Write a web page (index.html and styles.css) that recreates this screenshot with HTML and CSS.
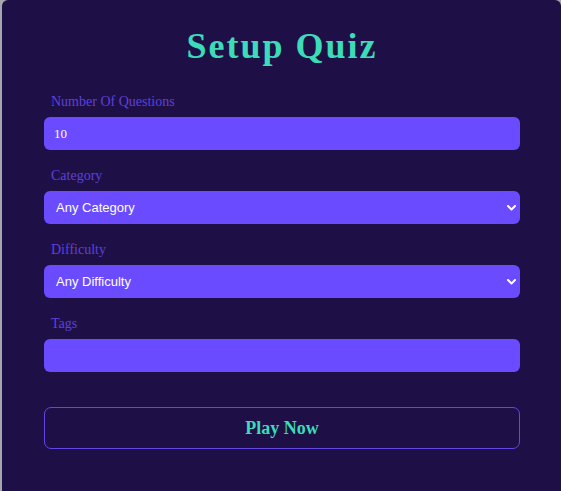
FILE: index.html
```html
<!DOCTYPE html>
<html lang="en">
<head>
<meta charset="utf-8">
<title>Setup Quiz</title>
<link rel="stylesheet" href="styles.css">
</head>
<body>
<main class="card">
  <h1 class="title">Setup Quiz</h1>
  <form class="form">
    <div class="group">
      <label class="label" for="amount">Number Of Questions</label>
      <input class="field field-num" id="amount" type="text" value="10">
    </div>
    <div class="group">
      <label class="label" for="category">Category</label>
      <div class="select-wrap">
        <select class="field field-select" id="category"><option>Any Category</option></select>
        <svg class="chevron" width="9" height="6" viewBox="0 0 9 6"><path d="M1 1 L4.5 4.5 L8 1" fill="none" stroke="#fff" stroke-width="2" stroke-linecap="round" stroke-linejoin="round"/></svg>
      </div>
    </div>
    <div class="group">
      <label class="label" for="difficulty">Difficulty</label>
      <div class="select-wrap">
        <select class="field field-select" id="difficulty"><option>Any Difficulty</option></select>
        <svg class="chevron" width="9" height="6" viewBox="0 0 9 6"><path d="M1 1 L4.5 4.5 L8 1" fill="none" stroke="#fff" stroke-width="2" stroke-linecap="round" stroke-linejoin="round"/></svg>
      </div>
    </div>
    <div class="group">
      <label class="label" for="tags">Tags</label>
      <input class="field" id="tags" type="text">
    </div>
    <button class="play" type="button">Play Now</button>
  </form>
</main>
</body>
</html>
```
FILE: styles.css
```css
html, body {
  margin: 0;
  padding: 0;
}
body {
  background: #a8a6ad;
  height: 491px;
  overflow: hidden;
}
.card {
  margin-left: 2px;
  width: 559px;
  height: 491px;
  box-sizing: border-box;
  padding: 26px 0 0 42px;
  background: #1e1047;
  border-radius: 6px 6px 0 0;
}
.title {
  margin: 0;
  width: 476px;
  text-align: center;
  font-family: "Liberation Serif", serif;
  font-weight: bold;
  font-size: 36px;
  line-height: 40px;
  letter-spacing: 2px;
  color: #3bdcb7;
}
.form {
  width: 476px;
  margin-top: 26px;
  display: flex;
  flex-direction: column;
  gap: 16px;
}
.group {
  display: flex;
  flex-direction: column;
}
.label {
  display: block;
  padding: 1px 0 0 7px;
  margin-bottom: 6px;
  font-family: "Liberation Serif", serif;
  font-size: 14px;
  line-height: 18px;
  color: #5d40dc;
}
.field {
  display: block;
  width: 100%;
  height: 33px;
  box-sizing: border-box;
  border: none;
  border-radius: 6px;
  background: #6a4bff;
  color: #fff;
  outline: none;
  margin: 0;
}
.field-num {
  padding: 0 0 0 10px;
  font-family: "Liberation Serif", serif;
  font-size: 13px;
}
.select-wrap {
  position: relative;
}
.field-select {
  appearance: none;
  -webkit-appearance: none;
  padding: 0 0 0 12px;
  font-family: "Liberation Sans", Arial, sans-serif;
  font-size: 13px;
}
.chevron {
  position: absolute;
  right: 4px;
  top: 14px;
}
.play {
  margin-top: 19px;
  height: 42px;
  border: 1px solid #6246e6;
  border-radius: 7px;
  background: transparent;
  font-family: "Liberation Serif", serif;
  font-weight: bold;
  font-size: 18px;
  color: #3bdcb7;
  cursor: pointer;
}
```
